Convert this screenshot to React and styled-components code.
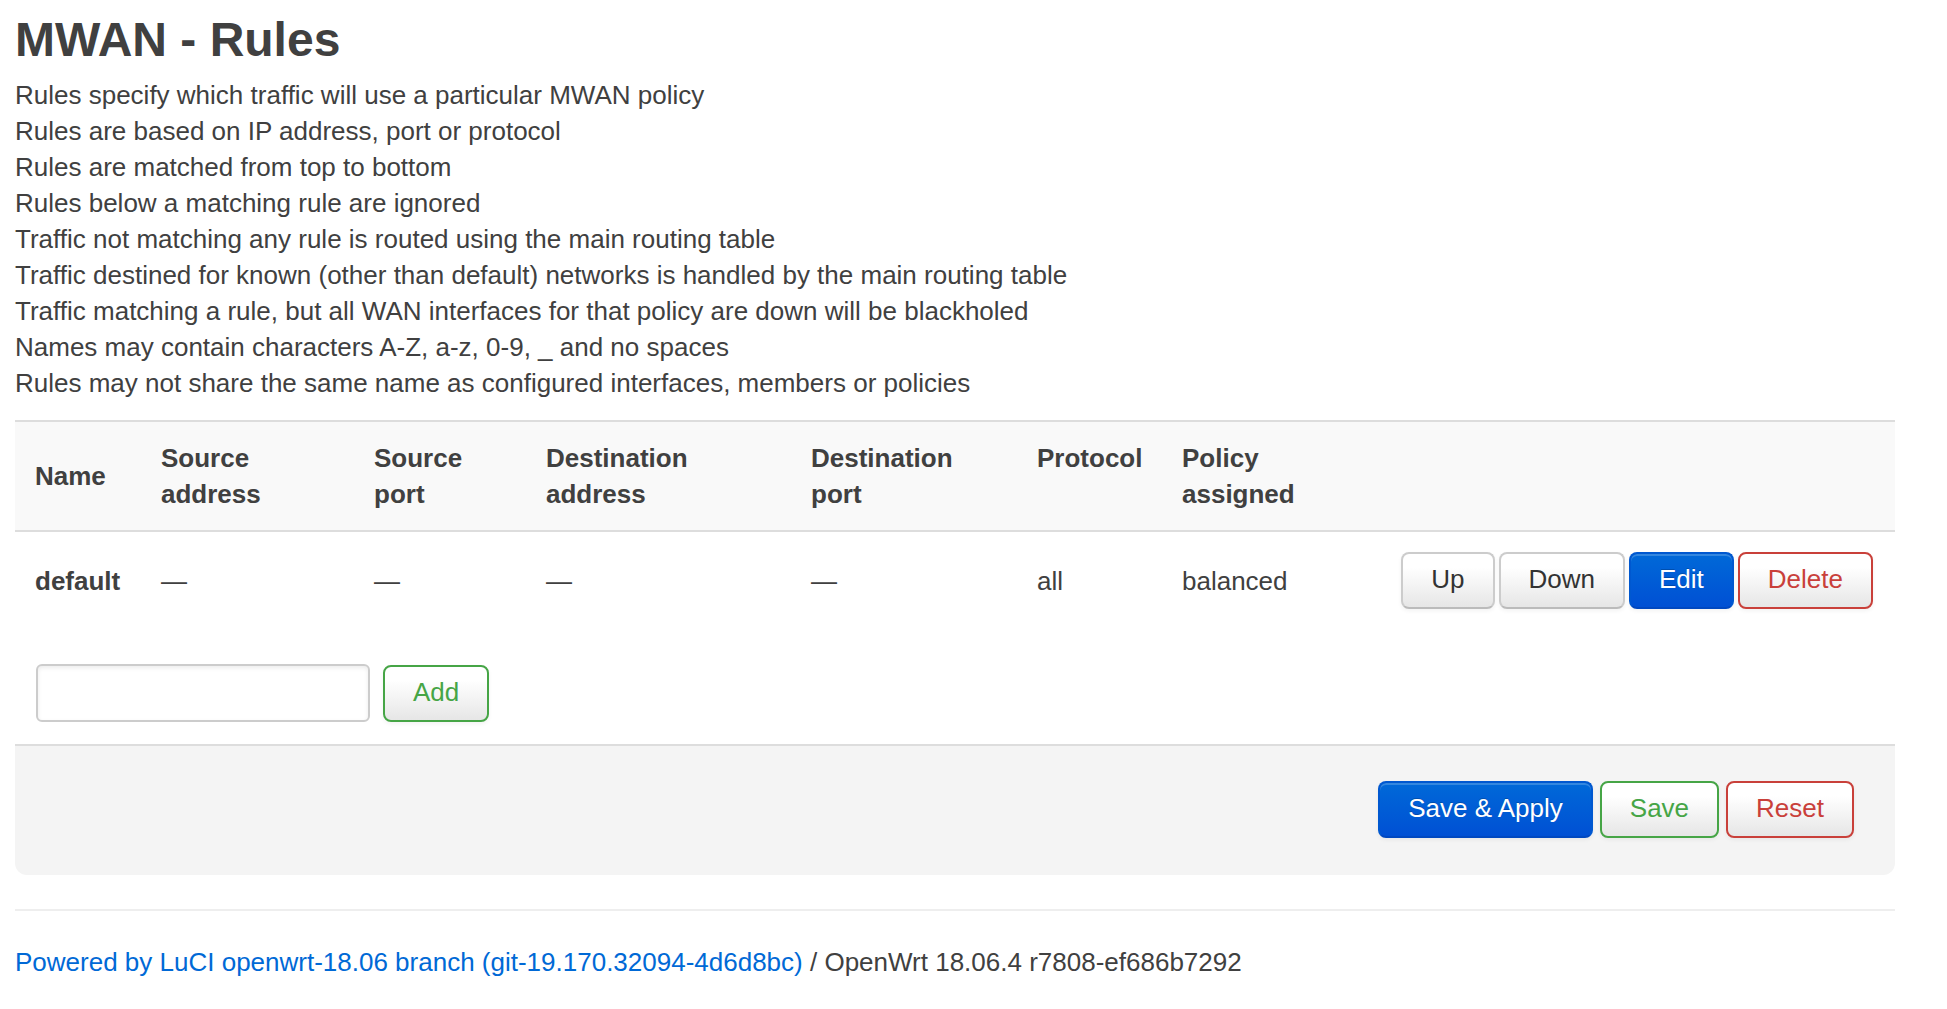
import React from "react"
import styled, { createGlobalStyle } from "styled-components"

const GlobalStyle = createGlobalStyle`
  html, body {
    margin: 0;
    padding: 0;
    background: #fff;
  }
  body {
    font-family: "Liberation Sans", Arial, sans-serif;
    font-size: 26px;
    line-height: 36px;
    color: #404040;
  }
`

const notes = [
  "Rules specify which traffic will use a particular MWAN policy",
  "Rules are based on IP address, port or protocol",
  "Rules are matched from top to bottom",
  "Rules below a matching rule are ignored",
  "Traffic not matching any rule is routed using the main routing table",
  "Traffic destined for known (other than default) networks is handled by the main routing table",
  "Traffic matching a rule, but all WAN interfaces for that policy are down will be blackholed",
  "Names may contain characters A-Z, a-z, 0-9, _ and no spaces",
  "Rules may not share the same name as configured interfaces, members or policies",
]

const rules = [
  {
    name: "default",
    srcAddr: "\u2014",
    srcPort: "\u2014",
    destAddr: "\u2014",
    destPort: "\u2014",
    proto: "all",
    policy: "balanced",
  },
]

const App = () => {
  return (
    <>
      <GlobalStyle />
      <Container>
        <Title>MWAN - Rules</Title>
        <Description>
          {notes.map((n) => (
            <div key={n}>{n}</div>
          ))}
        </Description>

        <Section>
          <HeadRow>
            <HeadCell $middle>Name</HeadCell>
            <HeadCell>
              Source
              <br />
              address
            </HeadCell>
            <HeadCell>
              Source
              <br />
              port
            </HeadCell>
            <HeadCell>
              Destination
              <br />
              address
            </HeadCell>
            <HeadCell>
              Destination
              <br />
              port
            </HeadCell>
            <HeadCell>Protocol</HeadCell>
            <HeadCell>
              Policy
              <br />
              assigned
            </HeadCell>
            <HeadCell />
          </HeadRow>
          {rules.map((r) => (
            <Row key={r.name}>
              <Cell $bold>{r.name}</Cell>
              <Cell>{r.srcAddr}</Cell>
              <Cell>{r.srcPort}</Cell>
              <Cell>{r.destAddr}</Cell>
              <Cell>{r.destPort}</Cell>
              <Cell>{r.proto}</Cell>
              <Cell>{r.policy}</Cell>
              <Actions>
                <Button>Up</Button>
                <Button>Down</Button>
                <Button $variant="primary">Edit</Button>
                <Button $variant="negative">Delete</Button>
              </Actions>
            </Row>
          ))}
          <CreateRow>
            <TextInput type="text" />
            <Button $variant="positive">Add</Button>
          </CreateRow>
        </Section>

        <PageActions>
          <Button $variant="primary">Save &amp; Apply</Button>
          <Button $variant="positive">Save</Button>
          <Button $variant="negative">Reset</Button>
        </PageActions>

        <Footer>
          <a href="#">
            Powered by LuCI openwrt-18.06 branch (git-19.170.32094-4d6d8bc)
          </a>{" "}
          / OpenWrt 18.06.4 r7808-ef686b7292
        </Footer>
      </Container>
    </>
  )
}

export default App

const Container = styled.div`
  width: 1880px;
  margin-left: 15px;
  padding-top: 4px;
`

const Title = styled.h2`
  margin: 0;
  font-size: 48px;
  line-height: 72px;
  font-weight: bold;
  color: #404040;
`

const Description = styled.div`
  padding-top: 1px;
  font-size: 26px;
  line-height: 36px;
`

const Section = styled.div`
  margin-top: 19px;
`

const columns = "126px 213px 172px 265px 226px 145px 1fr auto"

const HeadRow = styled.div`
  display: grid;
  grid-template-columns: ${columns};
  background: #f9f9f9;
  border-top: 2px solid #ddd;
  border-bottom: 2px solid #ddd;
`

const HeadCell = styled.div`
  padding: 18px 20px 18px;
  font-weight: bold;
  align-self: ${(p) => (p.$middle ? "center" : "start")};
`

const Row = styled.div`
  display: grid;
  grid-template-columns: ${columns};
  align-items: center;
`

const Cell = styled.div`
  padding: 20px;
  font-weight: ${(p) => (p.$bold ? "bold" : "normal")};
`

const Actions = styled.div`
  display: flex;
  gap: 4px;
  justify-content: flex-end;
  padding: 20px 22px 20px 20px;
`

const variants = {
  default: `
    color: #333;
    background-image: linear-gradient(#ffffff, #ffffff 25%, #e6e6e6);
    border-color: #ccc #ccc #bbb;
  `,
  primary: `
    color: #fff;
    background-image: linear-gradient(#0069d8, #0050d4);
    border-color: #0058d0 #0058d0 #0048c0;
    text-shadow: 0 -1px 0 rgba(0, 0, 0, 0.2);
  `,
  positive: `
    color: #46a546;
    background-image: linear-gradient(#ffffff, #ffffff 25%, #e6e6e6);
    border-color: #46a546;
  `,
  negative: `
    color: #c9403a;
    background-image: linear-gradient(#ffffff, #ffffff 25%, #e6e6e6);
    border-color: #c9403a;
  `,
}

const Button = styled.button`
  font-family: "Liberation Sans", Arial, sans-serif;
  font-size: 26px;
  line-height: 30px;
  padding: 10px 28px 13px;
  border: 2px solid;
  border-radius: 8px;
  cursor: pointer;
  box-shadow: inset 0 2px 0 rgba(255, 255, 255, 0.2),
    0 2px 4px rgba(0, 0, 0, 0.05);
  ${(p) => variants[p.$variant || "default"]}
`

const CreateRow = styled.div`
  display: flex;
  align-items: center;
  gap: 13px;
  padding: 35px 20px 22px 21px;
`

const TextInput = styled.input`
  box-sizing: border-box;
  width: 334px;
  height: 58px;
  border: 2px solid #ccc;
  border-radius: 6px;
  font-size: 26px;
  padding: 8px 12px;
  box-shadow: inset 0 2px 4px rgba(0, 0, 0, 0.08);
  outline: none;
`

const PageActions = styled.div`
  display: flex;
  justify-content: flex-end;
  gap: 7px;
  padding: 35px 41px 37px;
  background: #f4f4f4;
  border-top: 2px solid #ddd;
  border-radius: 0 0 12px 12px;
`

const Footer = styled.footer`
  margin-top: 34px;
  padding-top: 33px;
  border-top: 2px solid #eee;
  font-size: 26px;
  line-height: 36px;
  color: #404040;
  a {
    color: #0069d6;
    text-decoration: none;
  }
`
